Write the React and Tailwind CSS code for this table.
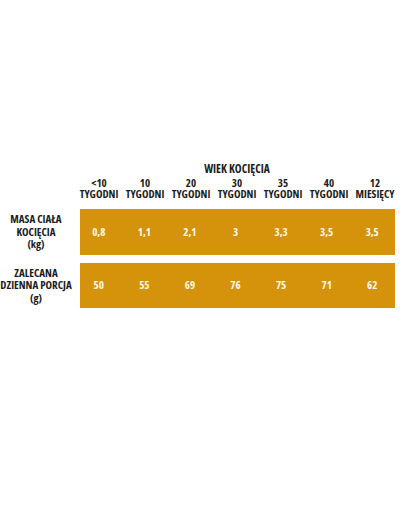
import React from "react";

const cols = [
  ["<10", "TYGODNI"],
  ["10", "TYGODNI"],
  ["20", "TYGODNI"],
  ["30", "TYGODNI"],
  ["35", "TYGODNI"],
  ["40", "TYGODNI"],
  ["12", "MIESIĘCY"],
];

const rows = [
  { label: ["MASA CIAŁA", "KOCIĘCIA", "(kg)"], values: ["0,8", "1,1", "2,1", "3", "3,3", "3,5", "3,5"], h: "h-[46px]", mt: "mt-[10px]" },
  { label: ["ZALECANA", "DZIENNA PORCJA", "(g)"], values: ["50", "55", "69", "76", "75", "71", "62"], h: "h-[45px]", mt: "mt-[8px]" },
];

export default function App() {
  return (
    <div className="w-[405px] h-[512px] bg-white text-[#1c1c1c] pt-[163px] font-bold font-stretch-condensed font-['Open_Sans',sans-serif]">
      <div className="ml-[76px] w-[322px] text-center text-[11.5px] leading-[12px]">WIEK KOCIĘCIA</div>
      <div className="ml-[76px] w-[322px] mt-[2px] grid grid-cols-7">
        {cols.map((c, i) => (
          <div key={i} className="text-center text-[11px] leading-[11px] whitespace-nowrap">
            <div>{c[0]}</div>
            <div>{c[1]}</div>
          </div>
        ))}
      </div>
      {rows.map((r, ri) => (
        <div key={ri} className={`flex items-center ${r.mt}`}>
          <div className="w-[74px] -ml-[1px] text-center text-[11px] leading-[12.5px] whitespace-nowrap">
            {r.label.map((l, li) => (
              <div key={li}>{l}</div>
            ))}
          </div>
          <div className={`ml-[7px] w-[315px] ${r.h} bg-[#d4930b] flex items-center`}>
            <div className="-ml-[4px] w-[322px] grid grid-cols-7 text-[#fff8ec] text-[11px]">
              {r.values.map((v, vi) => (
                <div key={vi} className="text-center">{v}</div>
              ))}
            </div>
          </div>
        </div>
      ))}
    </div>
  );
}
